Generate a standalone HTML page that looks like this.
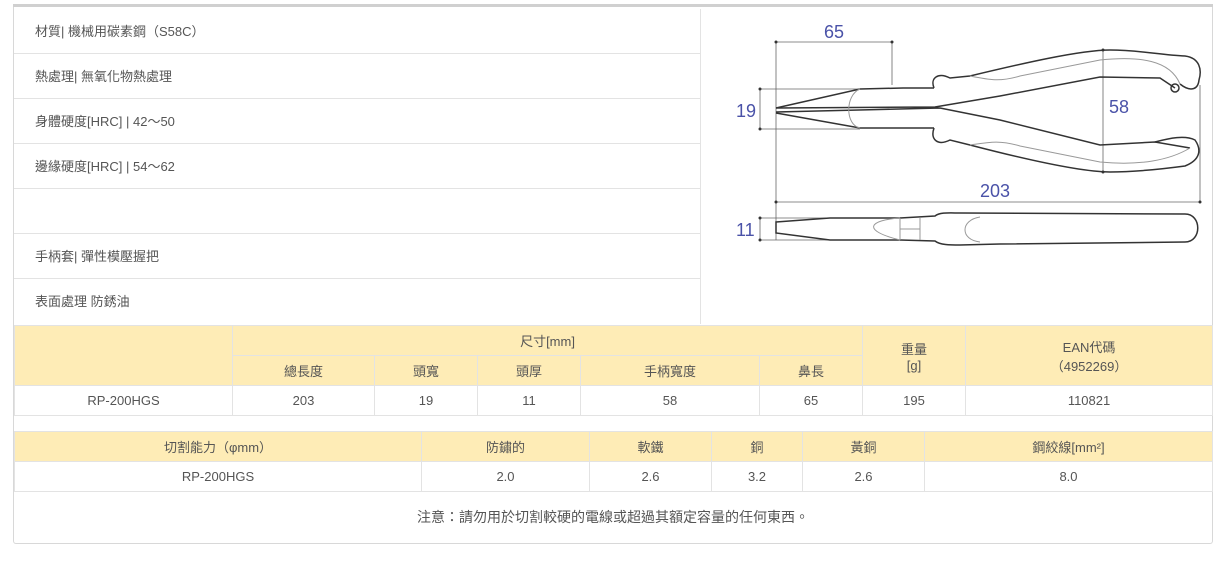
<!DOCTYPE html>
<html><head><meta charset="utf-8"><style>
*{margin:0;padding:0;box-sizing:border-box}
body{width:1232px;height:566px;background:#fff;font-family:"Liberation Sans","Noto Sans CJK TC",sans-serif;color:#555;font-size:13px;position:relative;overflow:hidden}
.topbar{position:absolute;left:13px;top:4px;width:1200px;height:3px;background:#d0d0d0}
.outer{position:absolute;left:13px;top:7px;width:1200px;height:537px;border:1px solid #d8d8d8;border-top:none;border-radius:0 0 3px 3px}
.list{position:absolute;left:14px;top:9px;width:687px;border-right:1px solid #e3e3e3}
.list div{height:45px;line-height:45px;padding-left:21px;border-bottom:1px solid #e3e3e3}
table{position:absolute;left:14px;border-collapse:collapse;table-layout:fixed}
td{border:1px solid #e3e3e3;text-align:center;padding:0;height:30px}
.h td{background:#feecb6}
svg{position:absolute;left:0;top:0}
.note{position:absolute;left:14px;top:490px;width:1198px;text-align:center;line-height:54px;font-size:14px}
</style></head><body>
<div class="topbar"></div>
<div class="outer"></div>
<div class="list">
<div>材質| 機械用碳素鋼（S58C）</div>
<div>熱處理| 無氧化物熱處理</div>
<div>身體硬度[HRC] | 42～50</div>
<div>邊緣硬度[HRC] | 54～62</div>
<div></div>
<div>手柄套| 彈性模壓握把</div>
<div style="border-bottom:none">表面處理 防銹油</div>
</div>
<svg width="1232" height="330" viewBox="0 0 1232 330" fill="none" stroke="#333" stroke-width="1.5">
<g stroke="#666" stroke-width="0.8">
<line x1="776" y1="42" x2="892" y2="42"/><line x1="892" y1="42" x2="892" y2="85"/>
<line x1="776" y1="42" x2="776" y2="240"/>
<line x1="760" y1="89" x2="860" y2="89"/><line x1="760" y1="129" x2="860" y2="129"/>
<line x1="760" y1="89" x2="760" y2="129"/>
<line x1="1103" y1="50" x2="1103" y2="172"/>
<line x1="776" y1="202" x2="1200" y2="202"/><line x1="1200" y1="85" x2="1200" y2="202"/>
<line x1="760" y1="218" x2="835" y2="218"/><line x1="760" y1="240" x2="835" y2="240"/>
<line x1="760" y1="218" x2="760" y2="240"/>
</g>
<g fill="#333" stroke="none">
<circle cx="776" cy="42" r="1.5"/><circle cx="892" cy="42" r="1.5"/><circle cx="760" cy="89" r="1.5"/><circle cx="760" cy="129" r="1.5"/><circle cx="1103" cy="50" r="1.5"/><circle cx="1103" cy="172" r="1.5"/><circle cx="776" cy="202" r="1.5"/><circle cx="1200" cy="202" r="1.5"/><circle cx="760" cy="218" r="1.5"/><circle cx="760" cy="240" r="1.5"/>
</g>
<path d="M776 108 L860 89 L903 88 L934 88 M776 113 L860 128 L903 128 L934 128"/>
<path d="M776 108 L935 107 L1000 96 L1100 77 L1160 78 L1175 88 M776 112 L940 108 L1000 120 L1100 145 L1155 142 L1190 148"/>
<path d="M934 88 C930 78 938 72 950 78 L970 76 C1020 64 1080 50 1110 50 C1140 50 1160 55 1185 56 C1200 58 1202 70 1199 80 C1198 90 1190 92 1180 84"/>
<path d="M934 128 C930 140 938 146 950 140 L970 145 C1020 158 1080 172 1110 172 C1140 172 1170 168 1185 166 C1200 160 1202 150 1195 140 C1185 135 1170 138 1155 142"/>
<circle cx="1175" cy="88" r="4"/>
<path stroke="#999" stroke-width="1" d="M860 89 C845 95 845 125 860 128 M970 76 C990 80 1000 82 1020 76 L1100 60 C1140 56 1170 60 1180 84 M970 145 C990 142 1000 140 1020 146 L1100 162 C1140 166 1170 160 1190 148"/>
<path d="M776 222 L830 218 L900 218 L935 216 C940 212 950 213 960 213 L1185 214 C1202 214 1202 242 1185 242 L1000 244 L960 245 C950 245 940 245 935 241 L900 240 L830 240 L776 233 Z"/>
<path stroke="#999" stroke-width="1" d="M900 218 C870 220 860 230 900 240 M900 218 L900 240 M920 218 L920 240 M900 229 L920 229 M980 217 C960 220 960 240 980 242"/>
<g fill="#4a52a8" stroke="none" font-family="Liberation Sans,sans-serif" font-size="18">
<text x="824" y="38">65</text><text x="736" y="117">19</text><text x="1109" y="113">58</text><text x="980" y="197">203</text><text x="736" y="236">11</text>
</g>
</svg>
<table style="top:325px;width:1198px">
<colgroup><col style="width:218px"><col style="width:142px"><col style="width:103px"><col style="width:103px"><col style="width:179px"><col style="width:103px"><col style="width:103px"><col style="width:247px"></colgroup>
<tr class="h"><td rowspan="2"></td><td colspan="5">尺寸[mm]</td><td rowspan="2">重量<br>[g]</td><td rowspan="2">EAN代碼<br>（4952269）</td></tr>
<tr class="h"><td>總長度</td><td>頭寬</td><td>頭厚</td><td>手柄寬度</td><td>鼻長</td></tr>
<tr><td style="height:29px">RP-200HGS</td><td>203</td><td>19</td><td>11</td><td>58</td><td>65</td><td>195</td><td>110821</td></tr>
</table>
<table style="top:431px;width:1198px">
<colgroup><col style="width:407px"><col style="width:168px"><col style="width:122px"><col style="width:91px"><col style="width:122px"><col style="width:288px"></colgroup>
<tr class="h"><td>切割能力（φmm）</td><td>防鏽的</td><td>軟鐵</td><td>銅</td><td>黃銅</td><td>鋼絞線[mm²]</td></tr>
<tr><td style="height:29px">RP-200HGS</td><td>2.0</td><td>2.6</td><td>3.2</td><td>2.6</td><td>8.0</td></tr>
</table>
<div class="note">注意：請勿用於切割較硬的電線或超過其額定容量的任何東西。</div>
</body></html>
